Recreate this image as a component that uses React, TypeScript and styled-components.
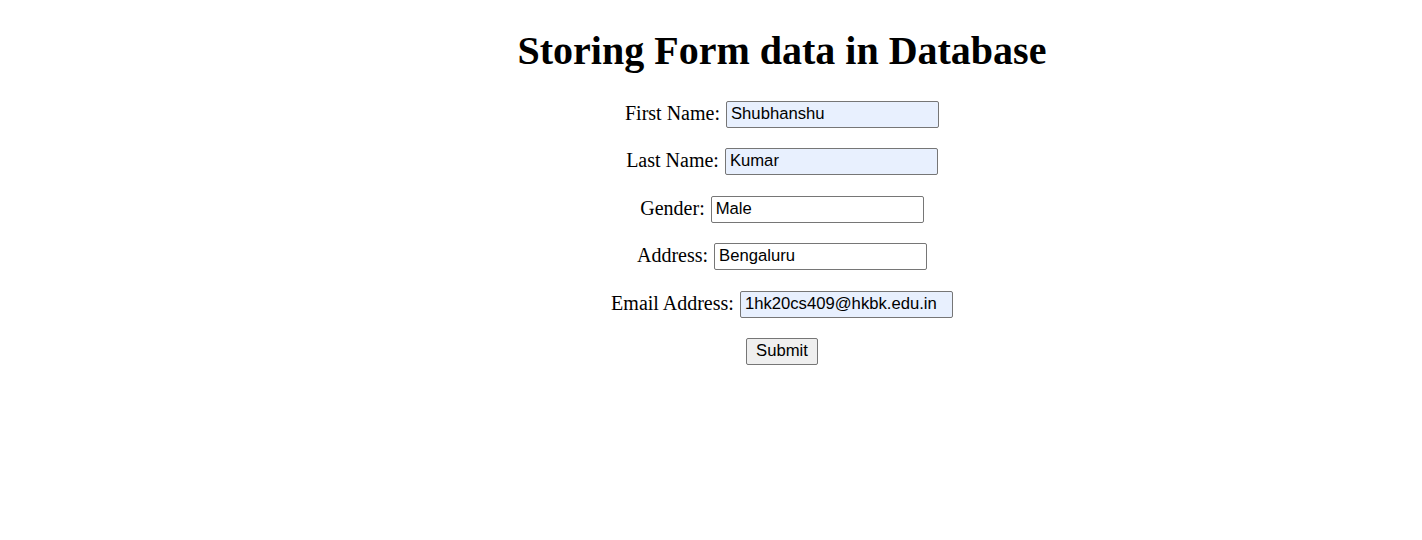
import React from "react";
import styled, { createGlobalStyle } from "styled-components";

const Global = createGlobalStyle`
  html, body { margin: 0; padding: 0; background: #ffffff; }
  body { font-family: "Liberation Serif", "Times New Roman", serif; color: #000; }
`;

const Page = styled.div`
  width: 1422px;
  height: 540px;
  box-sizing: border-box;
  padding-left: 142px;
  padding-top: 29px;
  text-align: center;
`;

const Title = styled.h1`
  margin: 0 0 28px 0;
  font-family: "Liberation Serif", "Times New Roman", serif;
  font-weight: bold;
  font-size: 40px;
  line-height: 44px;
`;

const Form = styled.form`
  display: flex;
  flex-direction: column;
  align-items: center;
  gap: 20.4px;
`;

const Row = styled.div`
  display: flex;
  justify-content: center;
  align-items: center;
  gap: 6px;
  height: 27px;
`;

const Label = styled.label`
  font-family: "Liberation Serif", "Times New Roman", serif;
  font-size: 20px;
  line-height: 27px;
  color: #000;
  margin-top: -2px;
`;

const Field = styled.input<{ $autofill?: boolean }>`
  box-sizing: border-box;
  width: 213px;
  height: 27px;
  margin: 0;
  padding: 0 4px 1px 4px;
  border: 1px solid #767676;
  border-radius: 2px;
  background: ${(p) => (p.$autofill ? "#e8f0fe" : "#ffffff")};
  font-family: "Liberation Sans", Arial, sans-serif;
  font-size: 16.67px;
  color: #000;
  outline: none;
`;

const SubmitButton = styled.button`
  box-sizing: border-box;
  width: 72px;
  height: 27px;
  margin: 0;
  padding: 0;
  border: 1px solid #767676;
  border-radius: 2px;
  background: #efefef;
  font-family: "Liberation Sans", Arial, sans-serif;
  font-size: 16.67px;
  color: #000;
`;

const fields = [
  { label: "First Name:", value: "Shubhanshu", autofill: true },
  { label: "Last Name:", value: "Kumar", autofill: true },
  { label: "Gender:", value: "Male", autofill: false },
  { label: "Address:", value: "Bengaluru", autofill: false },
  { label: "Email Address:", value: "1hk20cs409@hkbk.edu.in", autofill: true },
];

export default function App() {
  return (
    <>
      <Global />
      <Page>
        <Title>Storing Form data in Database</Title>
        <Form onSubmit={(e) => e.preventDefault()}>
          {fields.map((f) => (
            <Row key={f.label}>
              <Label>{f.label}</Label>
              <Field $autofill={f.autofill} defaultValue={f.value} />
            </Row>
          ))}
          <Row>
            <SubmitButton type="submit">Submit</SubmitButton>
          </Row>
        </Form>
      </Page>
    </>
  );
}
